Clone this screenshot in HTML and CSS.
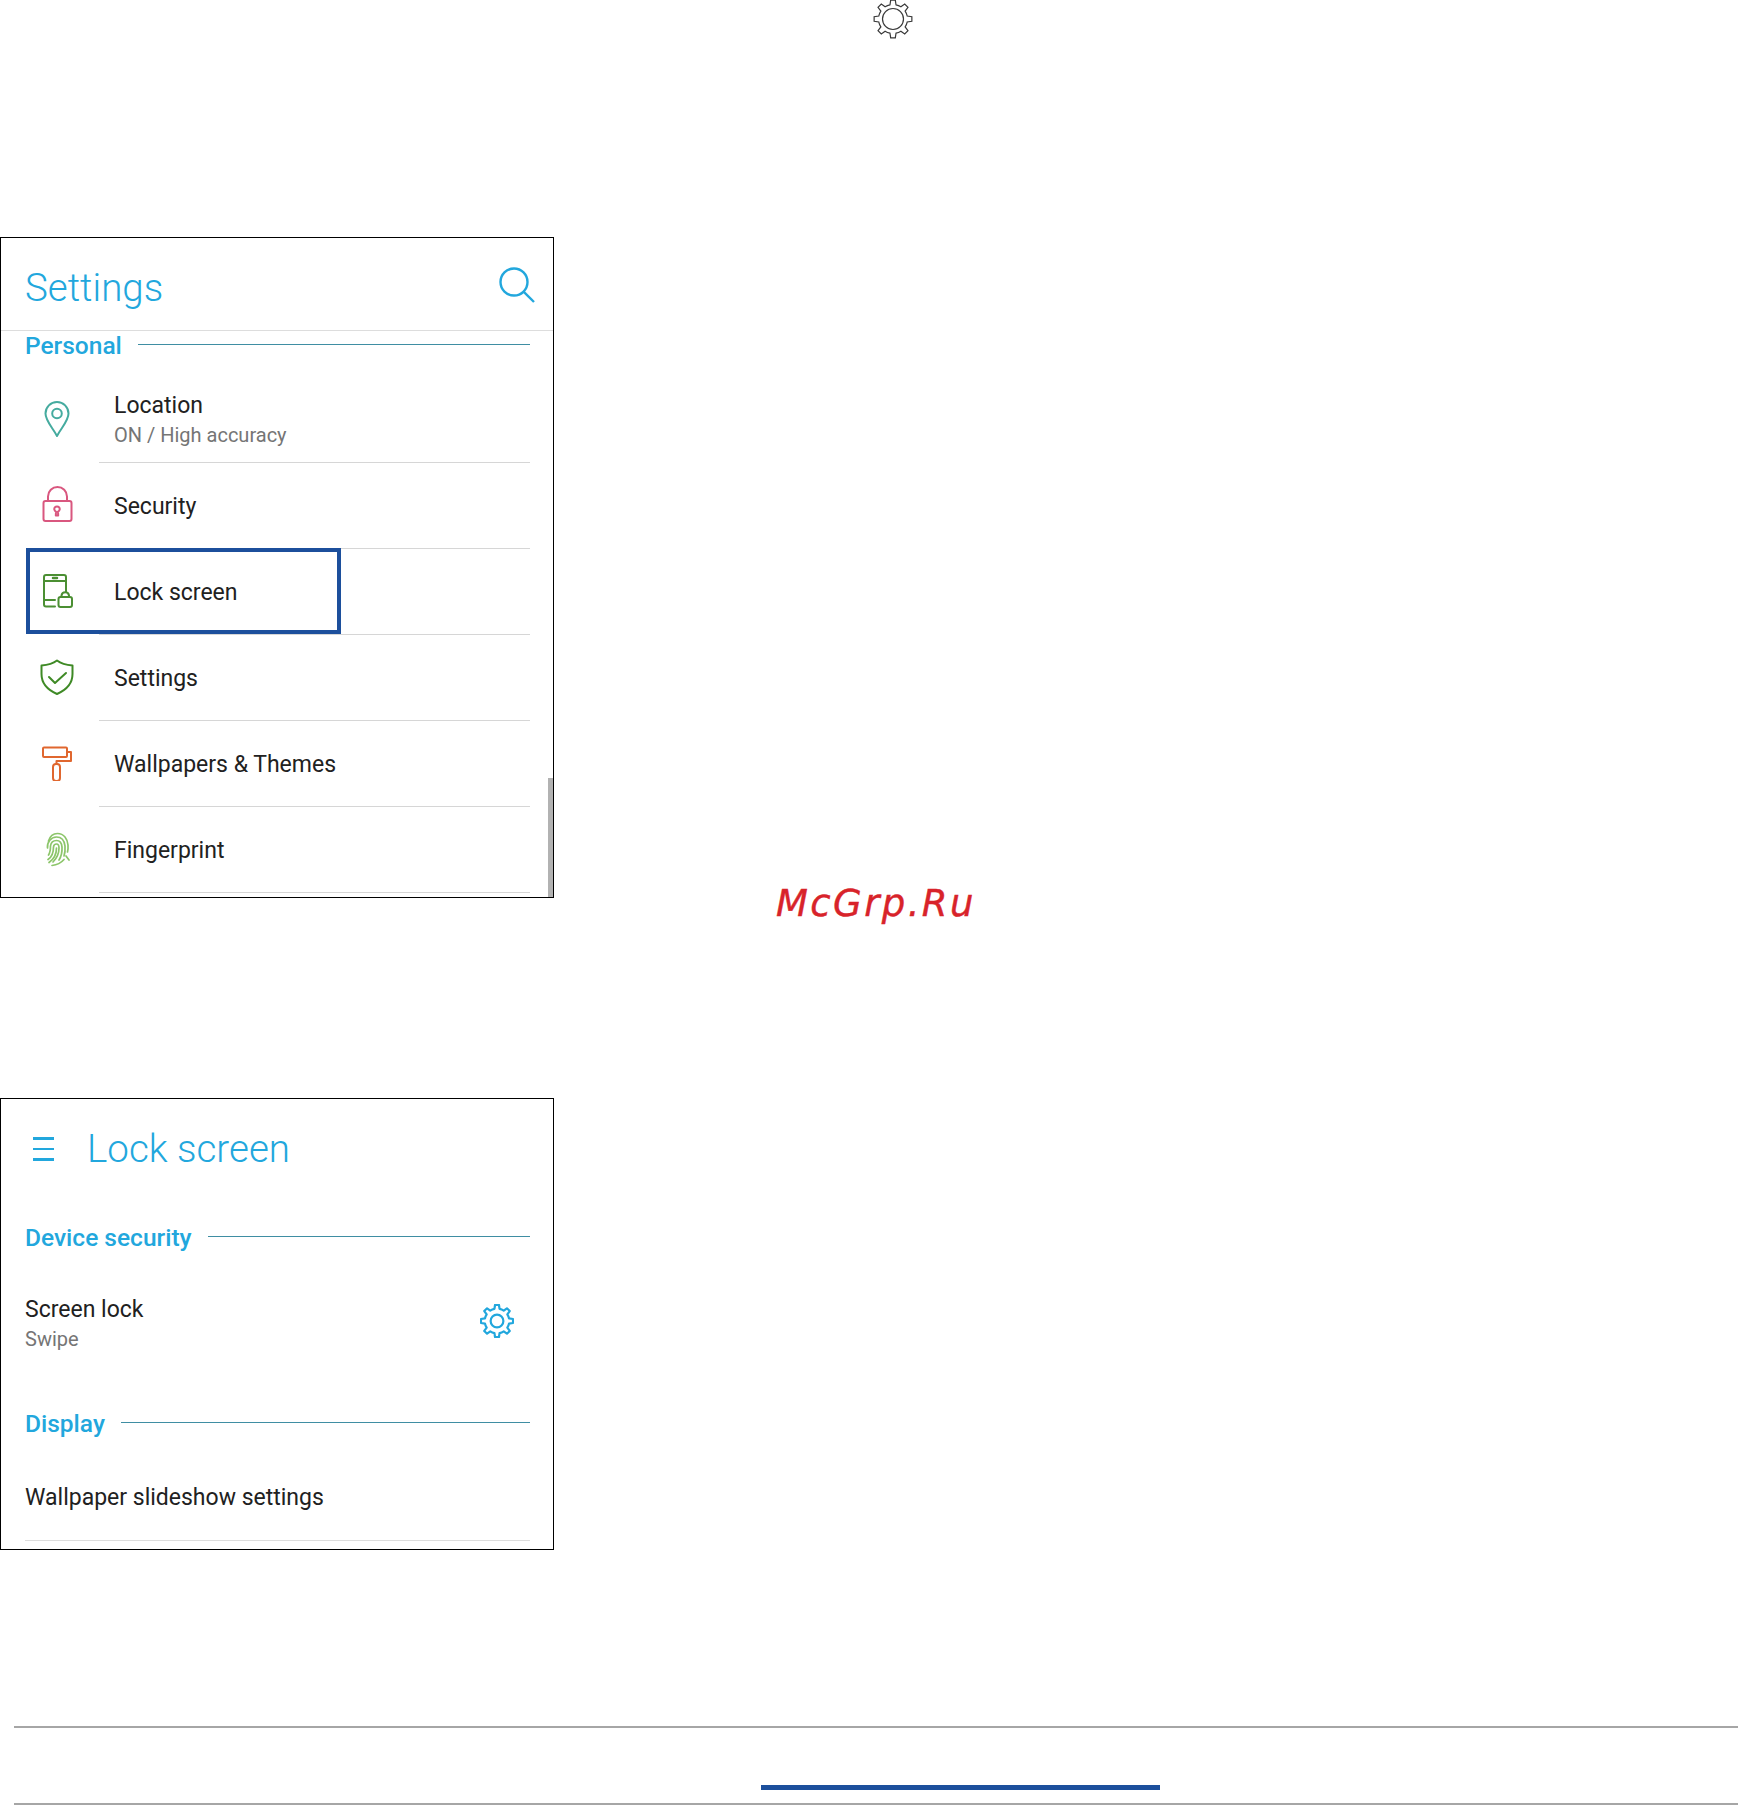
FILE: index.html
```html
<!DOCTYPE html>
<html lang="en">
<head>
<meta charset="utf-8">
<title>Lock screen</title>
<link rel="stylesheet" href="styles.css">
</head>
<body>
<svg class="defs" width="0" height="0" aria-hidden="true">
  <defs>
    <path id="gear-outline" d="M-3.01 -14.18L-2.32 -18.86L2.32 -18.86L3.01 -14.18A14.5 14.5 0 0 1 7.9 -12.16L11.7 -14.97L14.97 -11.7L12.16 -7.9A14.5 14.5 0 0 1 14.18 -3.01L18.86 -2.32L18.86 2.32L14.18 3.01A14.5 14.5 0 0 1 12.16 7.9L14.97 11.7L11.7 14.97L7.9 12.16A14.5 14.5 0 0 1 3.01 14.18L2.32 18.86L-2.32 18.86L-3.01 14.18A14.5 14.5 0 0 1 -7.9 12.16L-11.7 14.97L-14.97 11.7L-12.16 7.9A14.5 14.5 0 0 1 -14.18 3.01L-18.86 2.32L-18.86 -2.32L-14.18 -3.01A14.5 14.5 0 0 1 -12.16 -7.9L-14.97 -11.7L-11.7 -14.97L-7.9 -12.16A14.5 14.5 0 0 1 -3.01 -14.18Z"/>
  </defs>
</svg>
<div class="page">
  <div class="main">
    <div class="phones">
      <section class="panel panel-settings">
        <header class="app-bar">
          <h1 class="title">Settings</h1>
          <svg class="search" viewBox="0 0 36 36" width="36" height="36"><circle cx="15" cy="15" r="13.5"/><path d="M24.8 24.8L35 35"/></svg>
        </header>
        <div class="section section-first"><span class="section-name">Personal</span><span class="section-line"></span></div>
        <ul class="list">
          <li class="row row-tall">
            <span class="icon-cell"><svg class="icon icon-location" viewBox="0 0 34 36"><path d="M17 35C13 27 5.5 20 5.5 12.5A11.5 11.5 0 0 1 28.500 12.500C28.500 20 21 27 17 35Z"/><circle cx="17" cy="12.500" r="4.800"/></svg></span>
            <div class="row-body"><div><div class="row-title">Location</div><div class="row-sub">ON / High accuracy</div></div></div>
          </li>
          <li class="row">
            <span class="icon-cell"><svg class="icon icon-security" viewBox="0 0 34 36"><rect x="3.500" y="15" width="28" height="20" rx="2"/><path d="M8 15V10.500A9.500 9.500 0 0 1 27 10.500V15"/><path d="M15.800 29.500H18.200L18 25.600A2.700 2.700 0 1 0 16 25.600Z"/></svg></span>
            <div class="row-body"><div class="row-title">Security</div></div>
          </li>
          <li class="row">
            <span class="icon-cell"><svg class="icon icon-lockscreen" viewBox="0 0 34 36"><path d="M26 19V4A2 2 0 0 0 24 2H6A2 2 0 0 0 4 4V31.500A2 2 0 0 0 6 33.500H15M4 8H26M4 27H15"/><path class="speaker" d="M13 5H17"/><rect x="18.500" y="24" width="13.500" height="10" rx="2"/><path d="M21.500 24V22.500A3.800 3.800 0 0 1 29 22.500V24"/></svg></span>
            <div class="row-body"><div class="row-title">Lock screen</div></div>
            <span class="highlight"></span>
          </li>
          <li class="row">
            <span class="icon-cell"><svg class="icon icon-shield" viewBox="0 0 34 36"><path d="M17 1.500C21 4.500 27 6 32.500 6.500V15C32.500 25 25 31.500 17 35C9 31.500 1.500 25 1.500 15V6.500C7 6 13 4.500 17 1.500Z"/><path d="M9 18L15 24L26 14"/></svg></span>
            <div class="row-body"><div class="row-title">Settings</div></div>
          </li>
          <li class="row">
            <span class="icon-cell"><svg class="icon icon-roller" viewBox="0 0 34 36"><rect x="3" y="2.500" width="24" height="9.500" rx="1"/><path d="M27 7H31V16H16.500V19"/><rect x="13" y="19" width="7" height="17" rx="3"/></svg></span>
            <div class="row-body"><div class="row-title">Wallpapers &amp; Themes</div></div>
          </li>
          <li class="row">
            <span class="icon-cell"><svg class="icon icon-finger" viewBox="0 0 34 36"><path d="M8.500 10C10 5 13 2.500 17.500 2.500C24 2.500 27.500 8 28 14C28.200 17 28 19 27.500 21"/><path d="M7.500 17C7 11 11 6 16.500 6C22 6 24.500 10.500 25 15C25.300 19 25 22 24 25"/><path d="M8.500 24C10.500 21 10.500 18 10.500 15C11 11 13.500 9.500 16.500 9.500C20 9.500 21.700 12.500 22 16C22.300 21 21.500 25 19 29"/><path d="M8 28.500C12 26 13.500 22 13.500 16C13.700 14 15 13 16.500 13C18.500 13 19 15 19 17C19 22 17 27 13 31"/><path d="M16.500 17C16.500 23 14 28 9 31.500"/><path d="M26 25L29 29"/><path d="M12 34.500C17 34 21 32 24 28.500"/></svg></span>
            <div class="row-body"><div class="row-title">Fingerprint</div></div>
          </li>
        </ul>
        <span class="scrollbar"></span>
      </section>

      <section class="panel panel-lock">
        <header class="app-bar-lock">
          <span class="menu"><span class="menu-line"></span><span class="menu-line"></span><span class="menu-line"></span></span>
          <h1 class="title">Lock screen</h1>
        </header>
        <div class="section"><span class="section-name">Device security</span><span class="section-line"></span></div>
        <div class="setting">
          <div><div class="row-title">Screen lock</div><div class="row-sub">Swipe</div></div>
          <svg class="gear-blue" viewBox="-20 -20 40 40" width="34" height="34"><use href="#gear-outline"/><circle r="7.500"/></svg>
        </div>
        <div class="section"><span class="section-name">Display</span><span class="section-line"></span></div>
        <div class="plain-row"><div class="row-title">Wallpaper slideshow settings</div></div>
      </section>
    </div>
    <div class="aside">
      <svg class="gear-top" viewBox="-20 -19 40 40" width="40" height="40"><use href="#gear-outline"/><circle r="10.500"/></svg>
      <div class="watermark">McGrp.Ru</div>
    </div>
  </div>
  <footer class="footer">
    <div class="rule rule-first"></div>
    <div class="tab-bar"></div>
    <div class="rule rule-last"></div>
  </footer>
</div>
</body>
</html>
```
FILE: styles.css
```css
* { box-sizing: border-box; }
html, body { margin: 0; padding: 0; background: #fff; }
body { font-family: Roboto, "Liberation Sans", sans-serif; color: #212121; }
.defs { position: absolute; }
.page { width: 1738px; height: 1805px; overflow: hidden; }
.main { display: flex; align-items: flex-start; }
.phones { width: 554px; padding-top: 237px; display: flex; flex-direction: column; gap: 200px; }
.aside { display: flex; flex-direction: column; align-items: flex-start; }

.panel { position: relative; width: 554px; border: 1px solid #000; background: #fff; overflow: hidden; }
.panel-settings { height: 661px; }
.panel-lock { height: 452px; }

.app-bar { height: 93px; padding: 7px 18px 0 24px; display: flex; align-items: center; justify-content: space-between; border-bottom: 1px solid #ddd; }
.title { margin: 0; font-size: 38.500px; line-height: 40px; font-weight: 300; color: #22a7dd; }
.search { margin-bottom: 6px; fill: none; stroke: #22a7dd; stroke-width: 2.400; }

.section { height: 28px; padding: 0 23px 0 24px; display: flex; align-items: center; gap: 16px; }
.section-first { height: 29px; padding-top: 1px; }
.section-name { font-size: 24.500px; line-height: 28px; font-weight: 500; color: #22a7dd; }
.section-line { flex: 1; height: 1px; margin-bottom: 3px; background: #3f8ea3; }

.list { margin: 0; padding: 0; list-style: none; }
.row { position: relative; height: 86px; display: flex; }
.row-tall { height: 103px; }
.icon-cell { width: 98px; flex: none; display: flex; align-items: center; padding-left: 39px; }
.icon { width: 34px; height: 36px; margin-bottom: 2px; fill: none; stroke-width: 2; stroke-linejoin: round; stroke-linecap: round; }
.row-body { flex: 1; margin-right: 23px; padding: 2px 0 0 15px; display: flex; align-items: center; border-bottom: 1px solid #d6d6d6; }
.row-tall .row-body { align-items: flex-start; padding-top: 32px; }
.row-title { font-size: 23px; line-height: 28px; color: #212121; }
.row-sub { margin-top: 2px; font-size: 20px; line-height: 26px; color: #757575; }

.icon-location { stroke: #45ab9f; margin: 14px 0 0; }
.icon-security { stroke: #d9577f; margin-bottom: 4px; }
.icon-lockscreen { stroke: #4b8f33; }
.icon-lockscreen .speaker { stroke-width: 2.500; }
.icon-shield { stroke: #3f8a26; }
.icon-roller { stroke: #e0672f; }
.icon-finger { stroke: #8cc56a; stroke-width: 1.700; }

.highlight { position: absolute; left: 25px; top: -1px; width: 315px; height: 86px; border: 4px solid #1c4f9c; }
.scrollbar { position: absolute; right: 0; top: 540px; bottom: 0; width: 5px; background: #b2b2b2; }

.app-bar-lock { height: 125px; padding: 30px 0 0 32px; display: flex; align-items: flex-start; gap: 33px; }
.menu { width: 21px; height: 40px; padding-top: 8px; display: flex; flex-direction: column; gap: 8px; }
.menu-line { display: block; height: 2.500px; background: #22a7dd; }

.setting { height: 158px; padding: 44px 39px 0 24px; display: flex; align-items: flex-start; justify-content: space-between; }
.gear-blue { margin-top: 8px; fill: none; stroke: #22a7dd; stroke-width: 2.600; stroke-linejoin: round; }

.plain-row { height: 103px; margin: 0 23px 0 24px; padding-top: 46px; border-bottom: 1px solid #ddd; }

.gear-top { margin-left: 319px; fill: none; stroke: #3a3a3a; stroke-width: 1.200; }
.watermark { margin: 843px 0 0 222px; font-family: "DejaVu Sans", sans-serif; font-style: italic; font-size: 37px; line-height: 42px; letter-spacing: 2.400px; color: #d8232a; white-space: nowrap; -webkit-text-stroke: 0.400px #d8232a; }

.footer { margin-top: 176px; display: flex; flex-direction: column; }
.rule { height: 2px; margin-left: 14px; background: #a6a6a6; }
.tab-bar { width: 399px; height: 5px; margin: 57px 0 13px 761px; background: #1c4f9c; }
```
